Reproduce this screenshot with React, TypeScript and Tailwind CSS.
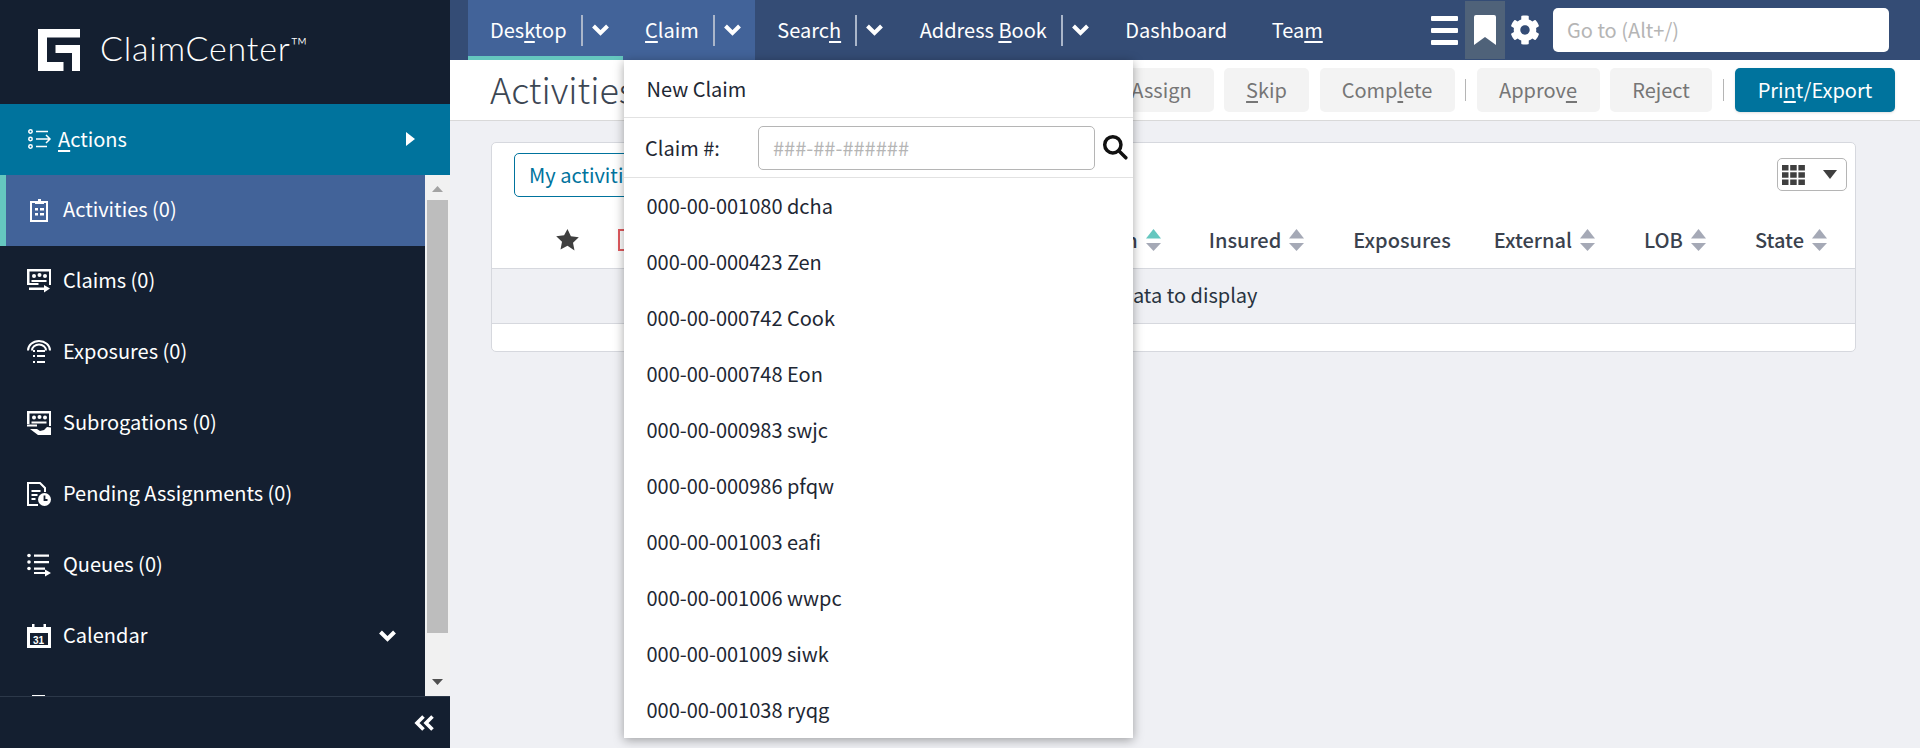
import React from 'react';

const FONT = "font-['Noto_Sans_CJK_SC','Noto_Sans',sans-serif]";

const Key: React.FC<{ children: React.ReactNode }> = ({ children }) => (
  <span className="underline decoration-2 underline-offset-[3px]">{children}</span>
);

const Chevron = () => (
  <svg width="17" height="12" viewBox="0 0 17 12" fill="none" stroke="white" strokeWidth="4">
    <path d="M1.5 2l7 7 7-7" />
  </svg>
);

const ActionsIcon = () => (
  <svg width="24" height="20" viewBox="0 0 24 20" fill="none" stroke="currentColor" strokeWidth="1.5">
    <circle cx="2.5" cy="2.5" r="1.7" />
    <circle cx="2.5" cy="10" r="1.7" />
    <circle cx="2.5" cy="17.5" r="1.7" />
    <path d="M8 2.5h12M8 10h14M8 17.5h11M18 6l4 4-4 4" />
  </svg>
);

const ActivitiesIcon = () => (
  <svg width="24" height="24" viewBox="0 0 24 24" fill="none">
    <path d="M4 4h16v19H4z" stroke="white" strokeWidth="2" fill="none" />
    <path d="M8 10h3v2.5H8zM13 10h4v2.5h-4zM8 15h3v2.5H8zM13 15h4v2.5h-4zM8 3h3V1h3v2h3v3H8z" fill="white" />
  </svg>
);

const ClaimsIcon = () => (
  <svg width="24" height="24" viewBox="0 0 24 24" fill="white">
    <path d="M0 0h24v16h-2V2.500H2.500V14h9v2H0z" />
    <circle cx="7" cy="7" r="2" />
    <circle cx="12.500" cy="6" r="2" />
    <circle cx="18" cy="7" r="2" />
    <path d="M4.500 11h15v2H4.500zM2 18.500h15V16l6 3.500-6 4V21H2z" />
  </svg>
);

const ExposuresIcon = () => (
  <svg width="24" height="24" viewBox="0 0 24 24" fill="none" stroke="white" strokeWidth="2">
    <path d="M1 10.500a11 9.500 0 0 1 22 0M5 10.500a7 6 0 0 1 14 0" />
    <path d="M6 11h2M10 11h8M6 16h2M10 16h8M6 22h2M10 22h8" />
  </svg>
);

const SubrogationsIcon = () => (
  <svg width="24" height="24" viewBox="0 0 24 24" fill="white">
    <path d="M0 0h24v15h-2V2.500H2.500V13H0z" />
    <circle cx="7" cy="6.500" r="2" />
    <circle cx="12.500" cy="6" r="2" />
    <circle cx="18" cy="6.500" r="2" />
    <path d="M4.500 10.500h15v2h-15zM0 13.500h10v2H0zM3 18h7l3 2 4-1 3-3 4 .5V24H11z" />
  </svg>
);

const PendingIcon = () => (
  <svg width="24" height="24" viewBox="0 0 24 24" fill="none">
    <path d="M11 23H1V1h12l5 5v4" stroke="white" strokeWidth="2" />
    <path d="M4.500 8h9v2h-9zM4.500 12h6v2h-6zM4.500 16h4v2h-4z" fill="white" />
    <circle cx="17.500" cy="17.500" r="6.500" fill="white" />
    <path d="M17.500 13.500v4.500h3" stroke="#141f30" strokeWidth="1.800" />
  </svg>
);

const QueuesIcon = () => (
  <svg width="24" height="24" viewBox="0 0 24 24" fill="white">
    <circle cx="2" cy="2.500" r="1.800" />
    <circle cx="2" cy="9" r="1.800" />
    <circle cx="2" cy="15.500" r="1.800" />
    <path d="M7 1.500h15v2.200H7zM7 8h15v2.200H7zM7 14.500h11v2.200H7zM7 19h11v-2.500l6 3.500-6 3.500V21H7z" />
  </svg>
);

const CalendarIcon = () => (
  <svg width="24" height="24" viewBox="0 0 24 24" fill="none">
    <path d="M0 3h24v21H0z" fill="white" />
    <path d="M3 9h18v12H3z" fill="#141f30" />
    <path d="M5 0h2.500v6H5zM16.500 0H19v6h-2.500z" fill="white" />
    <text x="6" y="19.500" fontSize="10" fontWeight="700" fill="white" fontFamily="Liberation Sans">31</text>
  </svg>
);

const SortArrows: React.FC<{ up?: string }> = ({ up = '#a5a9b6' }) => (
  <svg width="15" height="22" viewBox="0 0 15 22" className="ml-[8px] shrink-0">
    <path d="M7.500 0L15 9.500H0z" fill={up} />
    <path d="M0 14h15l-7.500 8z" fill="#a5a9b6" />
  </svg>
);

const navItems = [
  { label: <>Des<Key>k</Key>top</>, menu: true, cls: 'bg-[#426399]', bar: true },
  { label: <><Key>C</Key>laim</>, menu: true, cls: 'bg-[#426399]', bar: false },
  { label: <>Searc<Key>h</Key></>, menu: true, cls: '', bar: false },
  { label: <>Address <Key>B</Key>ook</>, menu: true, cls: '', bar: false },
  { label: <>Dashboard</>, menu: false, cls: '', bar: false },
  { label: <>Tea<Key>m</Key></>, menu: false, cls: '', bar: false },
];

const sideItems = [
  { label: 'Activities (0)', icon: <ActivitiesIcon />, active: true },
  { label: 'Claims (0)', icon: <ClaimsIcon /> },
  { label: 'Exposures (0)', icon: <ExposuresIcon /> },
  { label: 'Subrogations (0)', icon: <SubrogationsIcon /> },
  { label: 'Pending Assignments (0)', icon: <PendingIcon /> },
  { label: 'Queues (0)', icon: <QueuesIcon /> },
  { label: 'Calendar', icon: <CalendarIcon />, more: true },
];

const recentClaims = [
  '000-00-001080 dcha',
  '000-00-000423 Zen',
  '000-00-000742 Cook',
  '000-00-000748 Eon',
  '000-00-000983 swjc',
  '000-00-000986 pfqw',
  '000-00-001003 eafi',
  '000-00-001006 wwpc',
  '000-00-001009 siwk',
  '000-00-001038 ryqg',
];

const toolButton = 'h-11 rounded-[5px] bg-[#f3f3f3] text-[#767676] flex items-center justify-center';

const App: React.FC = () => {
  return (
    <div className={`${FONT} relative flex w-[1920px] h-[748px] overflow-hidden text-[20px] leading-[28px] bg-[#eff0f4] text-[#28333f]`}>
      {/* Sidebar */}
      <aside className="w-[450px] shrink-0 flex flex-col bg-[#141f30] text-white">
        <div className="h-[104px] flex items-start pl-[38px] pt-[29px] gap-[20px]">
          <svg width="42" height="42" viewBox="0 0 42 42" fill="white" className="shrink-0">
            <path d="M0 0H42V8.500H9V33H25.500V42H0Z" />
            <path d="M17.500 16H42V42H34V24H17.500Z" />
          </svg>
          <div className="-mt-[2px] font-['Lato',sans-serif] font-light text-[34px] leading-[42px] tracking-[0.8px] text-white whitespace-nowrap">
            ClaimCenter<span className="text-[23px] leading-none align-[7px] tracking-normal">™</span>
          </div>
        </div>
        <div className="h-[71px] bg-[#00739d] flex items-center pl-[28px] pr-[35px] pb-[2px] gap-[6px]">
          <ActionsIcon />
          <span className="flex-1"><Key>A</Key>ctions</span>
          <svg width="9" height="14" viewBox="0 0 9 14" fill="white"><path d="M0 0l9 7-9 7z" /></svg>
        </div>
        <div className="flex h-[521px]">
          <nav className="flex-1 overflow-hidden">
            {sideItems.map((item) => (
              <div
                key={item.label}
                className={`h-[71px] flex items-center gap-[12px] pl-[27px] pr-[29px] pb-[2px] ${item.active ? 'bg-[#426399] border-l-[6px] border-[#65c7bf] !pl-[21px]' : ''}`}
              >
                <span className="w-[24px] h-[24px] shrink-0">{item.icon}</span>
                <span className="flex-1 mb-[2px]">{item.label}</span>
                {item.more && <Chevron />}
              </div>
            ))}
            <div className="h-[71px] pl-[32px] pt-[23px]">
              <div className="w-[13px] h-[3px] bg-white" />
            </div>
          </nav>
          {/* Scrollbar */}
          <div className="w-[25px] bg-[#f1f1f1] flex flex-col items-center">
            <svg width="11" height="6" viewBox="0 0 11 6" className="mt-[11px] mb-[8px]"><path d="M5.500 0L11 6H0z" fill="#a3a3a3" /></svg>
            <div className="w-[21px] h-[433px] bg-[#bdbdbd]" />
            <div className="flex-1" />
            <svg width="11" height="6" viewBox="0 0 11 6" className="mb-[11px]"><path d="M0 0h11L5.500 6z" fill="#505050" /></svg>
          </div>
        </div>
        <div className="flex-1 border-t border-[#2c3849] flex items-center justify-end pr-[16px]">
          <svg width="20" height="16" viewBox="0 0 20 16" fill="none" stroke="white" strokeWidth="3.600">
            <path d="M9.500 1.500L3 8l6.500 6.500M18.500 1.500L12 8l6.500 6.500" />
          </svg>
        </div>
      </aside>

      <div className="flex-1 flex flex-col min-w-0">
        {/* Top nav */}
        <header className="h-[60px] shrink-0 bg-[#344c75] text-white flex items-stretch pl-[18px]">
          {navItems.map((item, i) => (
            <div key={i} className={`relative flex items-center pl-[22px] ${item.menu ? '' : 'pr-[22.5px]'} ${item.cls}`}>
              <span>{item.label}</span>
              {item.menu && (
                <>
                  <span className="ml-[14px] w-[2px] h-[31px] bg-[#aab6ca]" />
                  <span className="w-[40.5px] flex justify-center pr-[5.5px]"><Chevron /></span>
                </>
              )}
              {item.bar && <span className="absolute left-0 right-0 bottom-0 h-[4px] bg-[#65c7bf]" />}
            </div>
          ))}
          <div className="flex-1" />
          <div className="flex items-center">
            <div className="w-[27px] flex flex-col gap-[7px]">
              <span className="h-[5px] bg-white rounded-[1px]" />
              <span className="h-[5px] bg-white rounded-[1px]" />
              <span className="h-[5px] bg-white rounded-[1px]" />
            </div>
            <div className="ml-[7px] w-[40px] h-[58px] bg-[#4f6279] flex items-center justify-center">
              <svg width="22" height="30" viewBox="0 0 22 30" fill="white">
                <path d="M2 0h18a2 2 0 0 1 2 2v28L11 22 0 30V2a2 2 0 0 1 2-2z" />
              </svg>
            </div>
            <svg width="30" height="30" viewBox="0 0 512 512" fill="white" className="ml-[5px]">
              <path d="M487.400 315.700l-42.600-24.600c4.300-23.200 4.300-47 0-70.200l42.600-24.600c4.900-2.800 7.100-8.600 5.500-14-11.100-35.600-30-67.800-54.700-94.600-3.800-4.100-10-5.100-14.800-2.300L380.800 110c-17.900-15.400-38.500-27.300-60.800-35.100V25.800c0-5.600-3.900-10.500-9.400-11.700-36.700-8.200-74.300-7.800-109.200 0-5.500 1.200-9.400 6.100-9.400 11.700V75c-22.200 7.900-42.800 19.800-60.800 35.100L88.700 85.500c-4.900-2.800-11-1.900-14.800 2.300-24.700 26.700-43.600 58.900-54.700 94.600-1.700 5.400.6 11.200 5.500 14L67.300 221c-4.300 23.200-4.300 47 0 70.200l-42.600 24.600c-4.900 2.800-7.100 8.600-5.500 14 11.100 35.600 30 67.800 54.700 94.600 3.800 4.100 10 5.100 14.800 2.300l42.600-24.600c17.900 15.400 38.500 27.300 60.800 35.100v49.200c0 5.600 3.900 10.500 9.400 11.700 36.700 8.200 74.300 7.800 109.200 0 5.500-1.200 9.400-6.100 9.400-11.700v-49.200c22.200-7.900 42.800-19.800 60.800-35.100l42.600 24.600c4.900 2.800 11 1.900 14.800-2.300 24.700-26.700 43.600-58.900 54.700-94.600 1.500-5.500-.7-11.300-5.600-14.100zM256 336c-44.100 0-80-35.900-80-80s35.900-80 80-80 80 35.900 80 80-35.900 80-80 80z" />
            </svg>
          </div>
          <div className="ml-[13px] mr-[31px] self-center w-[336px] h-[44px] bg-white rounded-[5px] flex items-center pl-[14px] text-[#b5b5b5]">
            Go to (Alt+/)
          </div>
        </header>

        {/* Title bar */}
        <div className="h-[61px] shrink-0 bg-white border-b border-[#d9d9d9] flex items-start pt-[8px] pl-[40px] pr-[25px]">
          <h1 className="-mt-[2px] text-[36px] leading-[44px] font-extralight text-[#3c4653]">Activities</h1>
          <div className="flex-1" />
          <div className="flex items-center gap-[10.5px]">
            <div className={`${toolButton} w-[104px]`}>Assign</div>
            <div className={`${toolButton} w-[85px]`}><span><Key>S</Key>kip</span></div>
            <div className={`${toolButton} w-[135px]`}><span>Comp<Key>l</Key>ete</span></div>
            <span className="w-[1px] h-[22px] bg-[#b5b5b5]" />
            <div className={`${toolButton} w-[123px]`}><span>Approv<Key>e</Key></span></div>
            <div className={`${toolButton} w-[102px]`}>Reject</div>
            <span className="w-[1px] h-[22px] bg-[#b5b5b5] mr-[1px]" />
            <div className="h-11 w-[160px] rounded-[5px] bg-[#00739d] text-white flex items-center justify-center shadow-sm">
              <span>Pri<Key>n</Key>t/Export</span>
            </div>
          </div>
        </div>

        {/* Activities table */}
        <main className="flex-1 pt-[21px] pl-[41px] pr-[64px]">
          <div className="h-[210px] bg-white border border-[#d6d8de] rounded-[5px] flex flex-col">
            <div className="h-[63px] shrink-0 flex items-start pt-[10px] pl-[22px] pr-[8px]">
              <div className="h-[44px] w-[220px] border border-[#00739d] rounded-[5px] flex items-center pl-[14px] text-[#00739d]">My activities</div>
              <div className="flex-1" />
              <div className="mt-[5px] h-[33px] w-[70px] border border-[#b5b5b5] rounded-[5px] flex items-center pl-[4px] gap-[18px]">
                <svg width="23" height="20" viewBox="0 0 23 20" fill="#3f3f3f">
                  <path d="M0 0h6.500v5.500H0zM8.200 0h6.500v5.500H8.200zM16.400 0h6.500v5.500h-6.500zM0 7.200h6.500v5.500H0zM8.200 7.200h6.500v5.500H8.200zM16.400 7.200h6.500v5.500h-6.500zM0 14.400h6.500V20H0zM8.200 14.400h6.500V20H8.200zM16.400 14.400h6.500V20h-6.500z" />
                </svg>
                <svg width="14" height="9" viewBox="0 0 14 9" fill="#3f3f3f"><path d="M0 0h14L7 9z" /></svg>
              </div>
            </div>
            <div className="h-[63px] shrink-0 border-b border-[#d6d8de] pt-[6px] flex items-center text-[#3a424e] font-medium">
              <svg width="25" height="24" viewBox="0 0 24 24" fill="#3f3f3f" className="ml-[63px]">
                <path d="M12 1l3.400 7.300 7.900 1-5.800 5.400 1.500 7.800L12 17.700l-7 3.800 1.500-7.800L.7 8.300l7.900-1z" />
              </svg>
              <span className="ml-[38px] w-[13px] h-[22px] border-2 border-[#e25a5f]" />
              <div className="flex-1" />
              <div className="flex items-center mr-[48px]">Description<SortArrows up="#65c7bf" /></div>
              <div className="flex items-center mr-[49px]">Insured<SortArrows /></div>
              <div className="mr-[43px]">Exposures</div>
              <div className="flex items-center mr-[49px]">External<SortArrows /></div>
              <div className="flex items-center mr-[49px]">LOB<SortArrows /></div>
              <div className="flex items-center mr-[28px]">State<SortArrows /></div>
            </div>
            <div className="h-[55px] shrink-0 bg-[#eff0f4] border-b border-[#d6d8de] pb-[3px] flex items-center justify-center">No data to display</div>
          </div>
        </main>
      </div>

      {/* Claim menu */}
      <div className="absolute left-[624px] top-[60px] w-[509px] h-[678px] bg-white shadow-[0_2px_10px_rgba(0,0,0,0.35)] text-[#1e2733]">
        <div className="h-[58px] border-b border-[#e2e2e2] flex items-center pl-[22.5px]">New Claim</div>
        <div className="h-[60px] border-b border-[#e2e2e2] flex items-center pl-[21px]">
          <span className="w-[113px]">Claim #:</span>
          <div className="w-[337px] h-[44px] border border-[#b5b5b5] rounded-[5px] flex items-center pl-[14px] text-[#b5b5b5]">###-##-######</div>
          <svg width="26" height="26" viewBox="0 0 24 24" fill="none" stroke="#111" strokeWidth="3.200" className="ml-[7px] -mt-[2px]">
            <circle cx="10" cy="10" r="7.500" />
            <path d="M15.500 15.500L22 22" strokeLinecap="round" />
          </svg>
        </div>
        {recentClaims.map((claim) => (
          <div key={claim} className="h-[56px] flex items-center pl-[22.5px]">{claim}</div>
        ))}
      </div>
    </div>
  );
};

export default App;
